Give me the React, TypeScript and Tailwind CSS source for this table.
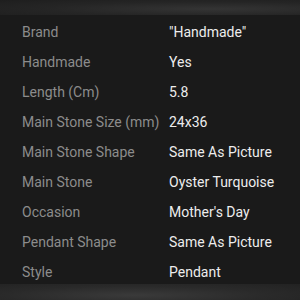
const specs: [string, string][] = [
  ["Brand", "\"Handmade\""],
  ["Handmade", "Yes"],
  ["Length (Cm)", "5.8"],
  ["Main Stone Size (mm)", "24x36"],
  ["Main Stone Shape", "Same As Picture"],
  ["Main Stone", "Oyster Turquoise"],
  ["Occasion", "Mother's Day"],
  ["Pendant Shape", "Same As Picture"],
  ["Style", "Pendant"],
];

export default function App() {
  return (
    <div className="w-[300px] h-[300px] flex flex-col bg-[#1a1a1a] font-['Roboto',sans-serif] overflow-hidden">
      <div className="h-[15px] shrink-0 bg-[radial-gradient(ellipse_at_70%_60%,#343434_0%,#252525_55%,#1e1e1e_100%)]" />
      <div className="h-[269px] shrink-0 overflow-hidden flex flex-col pl-[22px] pt-[2px]">
        {specs.map(([label, value]) => (
          <div key={label} className="h-[30px] shrink-0 flex items-center text-[14px] leading-none whitespace-nowrap">
            <span className="w-[147px] text-[#8c8c8c]">{label}</span>
            <span className="text-[#ededed]">{value}</span>
          </div>
        ))}
      </div>
      <div className="flex-1 bg-[radial-gradient(ellipse_at_45%_70%,#3a3a3a_0%,#2a2a2a_55%,#222_100%)]" />
    </div>
  );
}
